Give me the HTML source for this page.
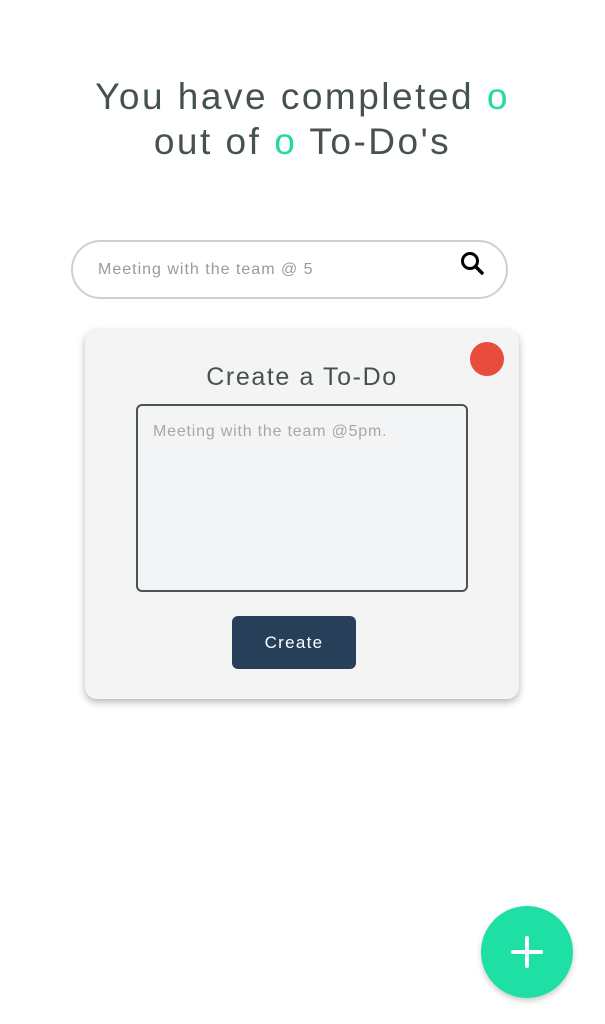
<!DOCTYPE html>
<html><head><style>
*{margin:0;padding:0;box-sizing:border-box}
body{width:605px;height:1024px;background:#fff;position:relative;font-family:"Liberation Sans",sans-serif;overflow:hidden}
.h{position:absolute;top:74px;left:0;width:605px;text-align:center;font-size:37px;line-height:45px;color:#45524f;letter-spacing:2.5px}
.g{color:#1ddc9c}
.search{position:absolute;left:71px;top:240px;width:437px;height:59px;border:2px solid #d0d0d0;border-radius:30px}
.search span{position:absolute;left:25px;top:19px;font-size:16px;color:#9a9a9a;letter-spacing:1px}
.card{position:absolute;left:85px;top:330px;width:434px;height:369px;background:#f4f4f4;border-radius:12px;box-shadow:0 3px 8px rgba(0,0,0,.3)}
.dot{position:absolute;left:385px;top:12px;width:34px;height:34px;border-radius:50%;background:#e74c3c}
.t{position:absolute;top:33px;left:0;width:434px;text-align:center;font-size:25px;color:#45524f;letter-spacing:1.6px}
.ta{position:absolute;left:51px;top:74px;width:332px;height:188px;border:2px solid #4a5553;border-radius:6px;background:#f3f4f5}
.ta span{position:absolute;left:15px;top:17px;font-size:16px;color:#a8a8a8;letter-spacing:0.8px}
.btn{position:absolute;left:147px;top:286px;width:124px;height:53px;background:#283f5a;border-radius:6px;color:#fff;font-size:17px;text-align:center;line-height:53px;letter-spacing:1.3px}
.fab{position:absolute;left:481px;top:906px;width:92px;height:92px;border-radius:50%;background:#1ee0a5;box-shadow:0 3px 6px rgba(0,0,0,.2)}
</style></head><body>
<div class="h">You have completed <span class="g">o</span><br>out of <span class="g">o</span> To-Do's</div>
<div class="search"><span>Meeting with the team @ 5</span>
<svg style="position:absolute;left:386px;top:8px" width="28" height="28" viewBox="0 0 28 28"><circle cx="11" cy="11" r="7.5" fill="none" stroke="#000" stroke-width="3"/><path d="M16.5 16.5L23 23" stroke="#000" stroke-width="3.5" stroke-linecap="round"/></svg></div>
<div class="card"><div class="dot"></div><div class="t">Create a To-Do</div>
<div class="ta"><span>Meeting with the team @5pm.</span></div>
<div class="btn">Create</div></div>
<div class="fab"><svg width="92" height="92" viewBox="0 0 92 92"><path d="M46 32V60M32 46H60" stroke="#fff" stroke-width="4" stroke-linecap="round"/></svg></div>
</body></html>
